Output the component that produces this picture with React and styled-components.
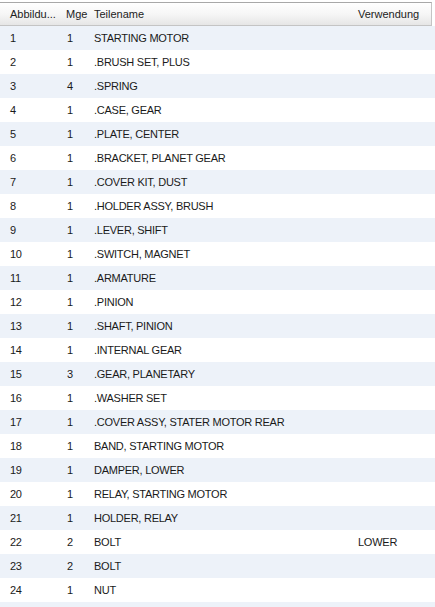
import React from "react";
import styled, { createGlobalStyle } from "styled-components";

const Global = createGlobalStyle`
  html, body { margin: 0; padding: 0; background: #fff; }
  body { font-family: "Liberation Sans", Arial, sans-serif; font-size: 11px; color: #1a1a1a; }
`;

const Grid = styled.div`
  width: 435px;
  height: 607px;
  overflow: hidden;
  padding-top: 2px;
  box-sizing: border-box;
`;

const cols = "60px 28px 264px 1fr";

const Header = styled.div`
  display: grid;
  grid-template-columns: ${cols};
  height: 23px;
  margin-right: 3px;
  border-top: 1px solid #a8a8a8;
  border-bottom: 1px solid #c4c4c4;
  border-right: 1px solid #c4c4c4;
  background: linear-gradient(#ffffff, #f6f6f6 50%, #e6e6e6);
  box-sizing: border-box;
  height: 24px;
`;

const HeadCell = styled.div`
  display: flex;
  align-items: center;
  padding-left: ${(p) => p.$pad || 10}px;
  color: #222;
  white-space: nowrap;
  overflow: hidden;
`;

const Row = styled.div`
  display: grid;
  grid-template-columns: ${cols};
  height: 24px;
  align-items: center;
  background: ${(p) => (p.$odd ? "#edf2f9" : "#ffffff")};
`;

const Cell = styled.div`
  padding-left: ${(p) => p.$pad || 10}px;
  white-space: nowrap;
  overflow: hidden;
  letter-spacing: -0.25px;
`;

const data = [
  ["1", "1", "STARTING MOTOR", ""],
  ["2", "1", ".BRUSH SET, PLUS", ""],
  ["3", "4", ".SPRING", ""],
  ["4", "1", ".CASE, GEAR", ""],
  ["5", "1", ".PLATE, CENTER", ""],
  ["6", "1", ".BRACKET, PLANET GEAR", ""],
  ["7", "1", ".COVER KIT, DUST", ""],
  ["8", "1", ".HOLDER ASSY, BRUSH", ""],
  ["9", "1", ".LEVER, SHIFT", ""],
  ["10", "1", ".SWITCH, MAGNET", ""],
  ["11", "1", ".ARMATURE", ""],
  ["12", "1", ".PINION", ""],
  ["13", "1", ".SHAFT, PINION", ""],
  ["14", "1", ".INTERNAL GEAR", ""],
  ["15", "3", ".GEAR, PLANETARY", ""],
  ["16", "1", ".WASHER SET", ""],
  ["17", "1", ".COVER ASSY, STATER MOTOR REAR", ""],
  ["18", "1", "BAND, STARTING MOTOR", ""],
  ["19", "1", "DAMPER, LOWER", ""],
  ["20", "1", "RELAY, STARTING MOTOR", ""],
  ["21", "1", "HOLDER, RELAY", ""],
  ["22", "2", "BOLT", "LOWER"],
  ["23", "2", "BOLT", ""],
  ["24", "1", "NUT", ""],
  ["", "", "", ""],
];

export default function App() {
  return (
    <>
      <Global />
      <Grid>
        <Header>
          <HeadCell>Abbildu...</HeadCell>
          <HeadCell $pad={6}>Mge</HeadCell>
          <HeadCell $pad={6}>Teilename</HeadCell>
          <HeadCell $pad={6}>Verwendung</HeadCell>
        </Header>
        {data.map((r, i) => (
          <Row key={i} $odd={i % 2 === 0}>
            <Cell>{r[0]}</Cell>
            <Cell $pad={7}>{r[1]}</Cell>
            <Cell $pad={6}>{r[2]}</Cell>
            <Cell $pad={6}>{r[3]}</Cell>
          </Row>
        ))}
      </Grid>
    </>
  );
}
